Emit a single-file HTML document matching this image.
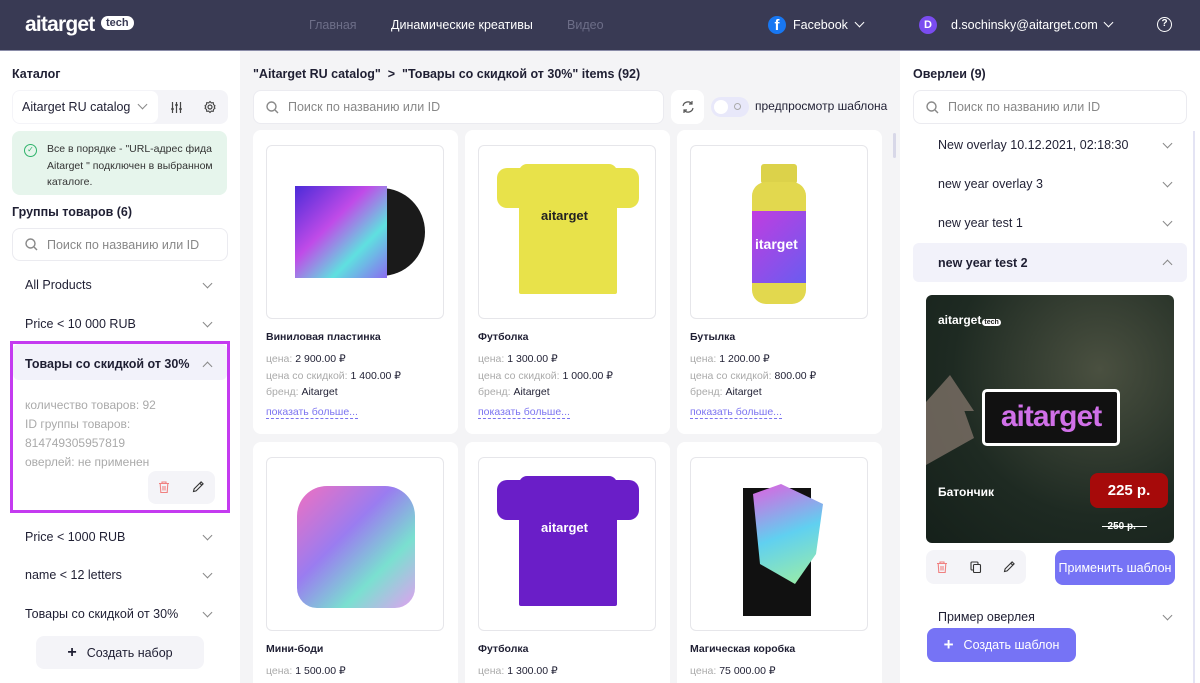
<!DOCTYPE html>
<html><head><meta charset="utf-8"><style>
*{box-sizing:border-box;margin:0;padding:0}
html,body{width:1200px;height:683px;overflow:hidden}
body{font-family:"Liberation Sans",sans-serif;color:#1f1f33;background:#f4f4f6;position:relative;font-size:12px}
.abs{position:absolute}
.hdr{left:0;top:0;width:1200px;height:51px;background:#393a54;border-bottom:1px solid #8a8ca8}
.left{left:0;top:51px;width:240px;height:632px;background:#fff;overflow:hidden}
.right{left:900px;top:51px;width:300px;height:632px;background:#fff;overflow:hidden}
.b{font-weight:bold}
.search{background:#fff;border:1px solid #ebebf0;border-radius:8px;color:#888;font-size:12.5px;display:flex;align-items:center;padding-left:12px}
.search svg{margin-right:9px}
.chev{position:absolute;width:7px;height:7px;border-right:1.3px solid #888;border-bottom:1.3px solid #888;transform:rotate(45deg)}
.chevu{transform:rotate(225deg)}
.item{position:absolute;font-size:12.5px}
.card{position:absolute;background:#fff;border-radius:8px;width:205px;overflow:hidden}
.img{position:absolute;left:13px;top:15px;width:178px;height:174px;border:1px solid #e6e6ea;border-radius:6px;overflow:hidden;background:#fff}
.ct{position:absolute;left:13px;top:201px;font-weight:bold;font-size:10.5px}
.cl{position:absolute;left:13px;font-size:10.5px;color:#aaa}
.cl span{color:#1f1f33}
.more{position:absolute;left:13px;top:276px;font-size:10.5px;color:#7b73f0;border-bottom:1px dashed #7b73f0}
.btnp{background:#7673f5;color:#fff;border-radius:8px;display:flex;align-items:center;justify-content:center;font-size:12.5px}
</style></head><body>
<svg width="0" height="0" style="position:absolute"><defs>
<g id="trash"><path d="M2 3.5h10M5 3.5V2h4v1.5M3.2 3.5l.6 9h6.4l.6-9M6 6v4.5M8 6v4.5" fill="none" stroke="currentColor" stroke-width="1.1"/></g>
<g id="pen"><path d="M2.5 11.5l.6-2.6 7-7 2 2-7 7zM8.8 3.2l2 2" fill="none" stroke="currentColor" stroke-width="1.1"/></g>
</defs></svg>
<div class="abs hdr">
 <div class="abs" style="left:25px;top:13px;color:#fff;font-size:21px;font-weight:bold;letter-spacing:-0.8px">aitarget</div>
 <div class="abs" style="left:101px;top:16px;background:#fff;color:#393a54;border-radius:9px;font-size:11px;font-weight:bold;padding:1px 5px">tech</div>
 <div class="abs" style="left:309px;top:18px;color:#6d6e88;font-size:12.5px">Главная</div>
 <div class="abs" style="left:391px;top:18px;color:#fff;font-size:12.5px">Динамические креативы</div>
 <div class="abs" style="left:567px;top:18px;color:#6d6e88;font-size:12.5px">Видео</div>
 <div class="abs" style="left:768px;top:16px;width:18px;height:18px;border-radius:50%;background:#1877f2;color:#fff;font-weight:bold;font-size:15px;text-align:center;line-height:20px">f</div>
 <div class="abs" style="left:793px;top:18px;color:#fff;font-size:12.5px">Facebook</div>
 <div class="chev" style="left:856px;top:19px;border-color:#fff"></div>
 <div class="abs" style="left:919px;top:16px;width:18px;height:18px;border-radius:50%;background:#7a4cf0;color:#fff;font-weight:bold;font-size:11px;text-align:center;line-height:18px">D</div>
 <div class="abs" style="left:951px;top:18px;color:#fff;font-size:12.5px">d.sochinsky@aitarget.com</div>
 <div class="chev" style="left:1105px;top:19px;border-color:#fff"></div>
 <div class="abs" style="left:1157px;top:17px;width:15px;height:15px;border:1.6px solid #fff;border-radius:50%;color:#fff;font-size:10px;font-weight:bold;text-align:center;line-height:12px">?</div>
</div>

<div class="abs left">
 <div class="abs b" style="left:12px;top:16px;font-size:12.5px">Каталог</div>
 <div class="abs" style="left:12px;top:39px;width:216px;height:34px;background:#f4f4f8;border-radius:8px"></div>
 <div class="abs" style="left:13px;top:40px;width:145px;height:32px;background:#fff;border-radius:7px;font-size:12.5px;padding:9px 0 0 9px">Aitarget RU catalog</div>
 <div class="chev" style="left:139px;top:50px"></div>
 <svg class="abs" style="left:170px;top:50px" width="13" height="13" viewBox="0 0 13 13"><path d="M2.5 1v11M6.5 1v11M10.5 1v11M1 8h3M5 4h3M9 8h3" stroke="#444" stroke-width="1.2"/></svg>
 <svg class="abs" style="left:203px;top:49px" width="14" height="14" viewBox="0 0 14 14"><circle cx="7" cy="7" r="2" fill="none" stroke="#444" stroke-width="1.2"/><path d="M7 1.5l1.3 1.4 1.9-.3.3 1.9L12 5.8l-.8 1.2.8 1.2-1.5 1.3-.3 1.9-1.9-.3L7 12.5l-1.3-1.4-1.9.3-.3-1.9L2 8.2 2.8 7 2 5.8l1.5-1.3.3-1.9 1.9.3z" fill="none" stroke="#444" stroke-width="1.1"/></svg>
 <div class="abs" style="left:12px;top:80px;width:215px;height:64px;background:#e6f5ec;border-radius:8px"></div>
 <div class="abs" style="left:24px;top:93px;width:13px;height:13px;border:1.5px solid #2fb36b;border-radius:50%;color:#2fb36b;font-size:8px;text-align:center;line-height:10px">✓</div>
 <div class="abs" style="left:47px;top:90px;font-size:10.5px;line-height:16.5px;color:#333;width:175px">Все в порядке - "URL-адрес фида Aitarget " подключен в выбранном каталоге.</div>
 <div class="abs b" style="left:12px;top:154px;font-size:12.5px">Группы товаров (6)</div>
 <div class="abs search" style="left:12px;top:177px;width:216px;height:33px"><svg width="13" height="13" viewBox="0 0 13 13"><circle cx="5.5" cy="5.5" r="4.5" fill="none" stroke="#888" stroke-width="1.4"/><path d="M9 9l3 3" stroke="#888" stroke-width="1.4"/></svg>Поиск по названию или ID</div>
 <div class="item" style="left:25px;top:227px">All Products</div><div class="chev" style="left:204px;top:229px"></div>
 <div class="item" style="left:25px;top:266px">Price &lt; 10 000 RUB</div><div class="chev" style="left:204px;top:268px"></div>
 <div class="abs" style="left:10px;top:290px;width:220px;height:172px;border:3px solid #c43bf0"></div>
 <div class="abs" style="left:13px;top:293px;width:214px;height:36px;background:#f2f2fa;border-radius:6px"></div>
 <div class="item b" style="left:25px;top:306px">Товары со скидкой от 30%</div><div class="chev chevu" style="left:204px;top:312px"></div>
 <div class="abs" style="left:25px;top:345px;font-size:12px;color:#aaa;line-height:19px">количество товаров: 92<br>ID группы товаров:<br>814749305957819<br>оверлей: не применен</div>
 <div class="abs" style="left:148px;top:420px;width:67px;height:33px;background:#f4f4f8;border-radius:8px"></div>
 <svg class="abs" style="left:157px;top:429px;color:#f08080" width="14" height="14" viewBox="0 0 14 14"><use href="#trash"/></svg>
 <svg class="abs" style="left:191px;top:429px;color:#333" width="14" height="14" viewBox="0 0 14 14"><use href="#pen"/></svg>
 <div class="item" style="left:25px;top:479px">Price &lt; 1000 RUB</div><div class="chev" style="left:204px;top:481px"></div>
 <div class="item" style="left:25px;top:517px">name &lt; 12 letters</div><div class="chev" style="left:204px;top:519px"></div>
 <div class="item" style="left:25px;top:556px">Товары со скидкой от 30%</div><div class="chev" style="left:204px;top:558px"></div>
 <div class="abs" style="left:36px;top:585px;width:168px;height:33px;background:#f4f4f8;border-radius:8px;font-size:12.5px;display:flex;align-items:center;justify-content:center"><b style="font-size:16px;margin-right:10px">+</b>Создать набор</div>
</div>

<div class="abs b" style="left:253px;top:67px;font-size:12.5px">"Aitarget RU catalog" &nbsp;&gt;&nbsp; "Товары со скидкой от 30%" items (92)</div>
<div class="abs search" style="left:253px;top:90px;width:411px;height:34px"><svg width="13" height="13" viewBox="0 0 13 13"><circle cx="5.5" cy="5.5" r="4.5" fill="none" stroke="#888" stroke-width="1.4"/><path d="M9 9l3 3" stroke="#888" stroke-width="1.4"/></svg>Поиск по названию или ID</div>
<div class="abs" style="left:671px;top:90px;width:33px;height:34px;background:#fff;border-radius:8px"></div>
<svg class="abs" style="left:681px;top:100px" width="14" height="14" viewBox="0 0 14 14"><path d="M2 6a5 5 0 0 1 9-2M12 8a5 5 0 0 1-9 2M11 1v3H8M3 13v-3h3" fill="none" stroke="#555" stroke-width="1.2"/></svg>
<div class="abs" style="left:711px;top:97px;width:38px;height:20px;background:#e8e8fa;border-radius:10px"></div>
<div class="abs" style="left:714px;top:100px;width:14px;height:14px;background:#fff;border-radius:50%"></div>
<div class="abs" style="left:734px;top:103px;width:7px;height:7px;border:1.3px solid #aaa;border-radius:50%"></div>
<div class="abs" style="left:755px;top:99px;font-size:12px">предпросмотр шаблона</div>
<div class="abs" style="left:893px;top:133px;width:3px;height:25px;background:#d8d8e8;border-radius:2px"></div>

<div class="card" style="left:253px;top:130px;height:304px">
 <div class="img"><div class="abs" style="left:70px;top:42px;width:88px;height:88px;border-radius:50%;background:#1a1a1a"></div><div class="abs" style="left:28px;top:40px;width:92px;height:92px;background:linear-gradient(135deg,#4b2bd8,#c04be8 40%,#5fe0e0 70%,#8a6cf0)"></div></div>
 <div class="ct">Виниловая пластинка</div>
 <div class="cl" style="top:223px">цена: <span>2 900.00 ₽</span></div>
 <div class="cl" style="top:240px">цена со скидкой: <span>1 400.00 ₽</span></div>
 <div class="cl" style="top:256px">бренд: <span>Aitarget</span></div>
 <div class="more">показать больше...</div>
</div>
<div class="card" style="left:465px;top:130px;height:304px">
 <div class="img"><div class="abs" style="left:40px;top:18px;width:98px;height:130px;background:#e8e24a;border-radius:8px 8px 2px 2px"></div><div class="abs" style="left:18px;top:22px;width:142px;height:40px;background:#e8e24a;border-radius:10px"></div><div class="abs" style="left:62px;top:62px;font-size:13px;font-weight:bold;color:#222">aitarget</div></div>
 <div class="ct">Футболка</div>
 <div class="cl" style="top:223px">цена: <span>1 300.00 ₽</span></div>
 <div class="cl" style="top:240px">цена со скидкой: <span>1 000.00 ₽</span></div>
 <div class="cl" style="top:256px">бренд: <span>Aitarget</span></div>
 <div class="more">показать больше...</div>
</div>
<div class="card" style="left:677px;top:130px;height:304px">
 <div class="img"><div class="abs" style="left:70px;top:18px;width:36px;height:20px;background:#dcd24a;border-radius:3px"></div><div class="abs" style="left:61px;top:36px;width:54px;height:122px;background:#e2d84e;border-radius:14px"></div><div class="abs" style="left:61px;top:65px;width:54px;height:72px;background:linear-gradient(135deg,#c03de0,#6a5cf0)"></div><div class="abs" style="left:64px;top:90px;font-size:14px;font-weight:bold;color:#fff">itarget</div></div>
 <div class="ct">Бутылка</div>
 <div class="cl" style="top:223px">цена: <span>1 200.00 ₽</span></div>
 <div class="cl" style="top:240px">цена со скидкой: <span>800.00 ₽</span></div>
 <div class="cl" style="top:256px">бренд: <span>Aitarget</span></div>
 <div class="more">показать больше...</div>
</div>
<div class="card" style="left:253px;top:442px;height:241px;border-radius:8px 8px 0 0">
 <div class="img"><div class="abs" style="left:30px;top:28px;width:118px;height:122px;background:linear-gradient(135deg,#f070c0,#9a7cf0 40%,#7ae0d0 70%,#e0a0f0);border-radius:30px 30px 20px 20px"></div></div>
 <div class="ct">Мини-боди</div>
 <div class="cl" style="top:223px">цена: <span>1 500.00 ₽</span></div>
</div>
<div class="card" style="left:465px;top:442px;height:241px;border-radius:8px 8px 0 0">
 <div class="img"><div class="abs" style="left:40px;top:18px;width:98px;height:130px;background:#6a1ec8;border-radius:8px 8px 2px 2px"></div><div class="abs" style="left:18px;top:22px;width:142px;height:40px;background:#6a1ec8;border-radius:10px"></div><div class="abs" style="left:62px;top:62px;font-size:13px;font-weight:bold;color:#fff">aitarget</div></div>
 <div class="ct">Футболка</div>
 <div class="cl" style="top:223px">цена: <span>1 300.00 ₽</span></div>
</div>
<div class="card" style="left:677px;top:442px;height:241px;border-radius:8px 8px 0 0">
 <div class="img"><div class="abs" style="left:52px;top:30px;width:68px;height:128px;background:#111"></div><div class="abs" style="left:62px;top:26px;width:70px;height:100px;background:linear-gradient(160deg,#e060e0,#60d0f0 50%,#a0f0a0);clip-path:polygon(0 10%,40% 0,100% 20%,90% 70%,60% 100%,10% 80%)"></div></div>
 <div class="ct">Магическая коробка</div>
 <div class="cl" style="top:223px">цена: <span>75 000.00 ₽</span></div>
</div>

<div class="abs right">
 <div class="abs b" style="left:13px;top:16px;font-size:12.5px">Оверлеи (9)</div>
 <div class="abs search" style="left:13px;top:39px;width:274px;height:34px"><svg width="13" height="13" viewBox="0 0 13 13"><circle cx="5.5" cy="5.5" r="4.5" fill="none" stroke="#888" stroke-width="1.4"/><path d="M9 9l3 3" stroke="#888" stroke-width="1.4"/></svg>Поиск по названию или ID</div>
 <div class="abs" style="left:293px;top:80px;width:2px;height:560px;background:#e4e4f4"></div>
 <div class="item" style="left:38px;top:87px">New overlay 10.12.2021, 02:18:30</div><div class="chev" style="left:264px;top:89px"></div>
 <div class="item" style="left:38px;top:126px">new year overlay 3</div><div class="chev" style="left:264px;top:128px"></div>
 <div class="item" style="left:38px;top:165px">new year test 1</div><div class="chev" style="left:264px;top:167px"></div>
 <div class="abs" style="left:13px;top:192px;width:274px;height:39px;background:#f2f2fa;border-radius:6px"></div>
 <div class="item b" style="left:38px;top:205px">new year test 2</div><div class="chev chevu" style="left:264px;top:210px"></div>
 <div class="abs" style="left:26px;top:244px;width:248px;height:248px;border-radius:6px;overflow:hidden;background:radial-gradient(circle at 70% 30%,#4a5040,#1e2a22 60%,#15201a)">
  <div class="abs" style="left:12px;top:18px;color:#fff;font-weight:bold;font-size:12px">aitarget<span style="background:#fff;color:#222;border-radius:5px;font-size:7px;padding:0 2px;margin-left:1px">tech</span></div>
  <div class="abs" style="left:0;top:80px;width:48px;height:90px;background:#8a7a70;opacity:.7;clip-path:polygon(50% 0,100% 40%,80% 40%,100% 70%,0 100%,0 30%)"></div>
  <div class="abs" style="left:56px;top:94px;width:138px;height:57px;background:#111;border:3px solid #fff;border-radius:5px;color:#d070e8;font-weight:bold;font-size:30px;text-align:center;line-height:50px;letter-spacing:-1px">aitarget</div>
  <div class="abs" style="left:12px;top:190px;color:#fff;font-weight:bold;font-size:12px">Батончик</div>
  <div class="abs" style="left:164px;top:178px;width:78px;height:35px;background:#a60a0a;border-radius:8px;color:#fff;font-weight:bold;font-size:15px;text-align:center;line-height:35px">225 р.</div>
  <div class="abs" style="left:176px;top:226px;color:#fff;font-weight:bold;font-size:10px;text-decoration:line-through">&nbsp;&nbsp;250 р.&nbsp;&nbsp;&nbsp;&nbsp;</div>
 </div>
 <div class="abs" style="left:26px;top:499px;width:100px;height:34px;background:#f4f4f8;border-radius:8px"></div>
 <svg class="abs" style="left:35px;top:509px;color:#f08080" width="14" height="14" viewBox="0 0 14 14"><use href="#trash"/></svg>
 <svg class="abs" style="left:69px;top:509px" width="14" height="14" viewBox="0 0 14 14"><rect x="2" y="2" width="7" height="8" rx="1" fill="none" stroke="#333" stroke-width="1.1"/><rect x="4.5" y="4.5" width="7" height="8" rx="1" fill="#f4f4f8" stroke="#333" stroke-width="1.1"/></svg>
 <svg class="abs" style="left:102px;top:509px;color:#333" width="14" height="14" viewBox="0 0 14 14"><use href="#pen"/></svg>
 <div class="abs btnp" style="left:155px;top:499px;width:120px;height:35px">Применить шаблон</div>
 <div class="item" style="left:38px;top:559px">Пример оверлея</div><div class="chev" style="left:264px;top:561px"></div>
 <div class="abs btnp" style="left:27px;top:577px;width:149px;height:34px"><b style="font-size:17px;margin-right:10px">+</b>Создать шаблон</div>
</div>
</body></html>
